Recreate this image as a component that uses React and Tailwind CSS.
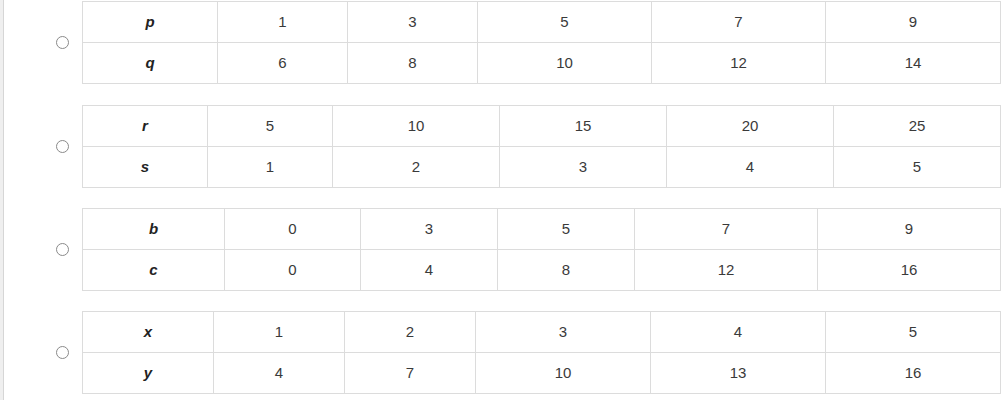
import React from "react";

const tables = [
  {
    vars: ["p", "q"],
    widths: ["w-[135px]", "w-[130px]", "w-[130px]", "w-[174px]", "w-[174px]", "w-[175px]"],
    rows: [
      [1, 3, 5, 7, 9],
      [6, 8, 10, 12, 14],
    ],
    gap: "mt-px",
  },
  {
    vars: ["r", "s"],
    widths: ["w-[125px]", "w-[125px]", "w-[167px]", "w-[167px]", "w-[167px]", "w-[167px]"],
    rows: [
      [5, 10, 15, 20, 25],
      [1, 2, 3, 4, 5],
    ],
    gap: "mt-[21px]",
  },
  {
    vars: ["b", "c"],
    widths: ["w-[142px]", "w-[136px]", "w-[137px]", "w-[137px]", "w-[183px]", "w-[183px]"],
    rows: [
      [0, 3, 5, 7, 9],
      [0, 4, 8, 12, 16],
    ],
    gap: "mt-[20px]",
  },
  {
    vars: ["x", "y"],
    widths: ["w-[131px]", "w-[131px]", "w-[131px]", "w-[175px]", "w-[175px]", "w-[175px]"],
    rows: [
      [1, 2, 3, 4, 5],
      [4, 7, 10, 13, 16],
    ],
    gap: "mt-[20px]",
  },
];

function ValueTable({ vars, widths, rows }) {
  return (
    <div className="border-l border-t border-[#dcdcdc]">
      {rows.map((row, i) => (
        <div key={i} className="flex">
          <div
            className={`${widths[0]} h-[41px] flex items-center justify-center border-r border-b border-[#dcdcdc] font-bold italic text-[#222]`}
          >
            {vars[i]}
          </div>
          {row.map((v, j) => (
            <div
              key={j}
              className={`${widths[j + 1]} h-[41px] flex items-center justify-center border-r border-b border-[#dcdcdc] text-[#3a3a3a]`}
            >
              {v}
            </div>
          ))}
        </div>
      ))}
    </div>
  );
}

export default function App() {
  return (
    <div
      className="flex w-[1005px] h-[400px] bg-white text-[15px] overflow-hidden"
      style={{ fontFamily: '"Liberation Sans", Arial, sans-serif' }}
    >
      <div className="w-[4px] shrink-0 bg-[#efefef] border-r border-[#d6d6d6]" />
      <div className="flex flex-col pl-[52px]">
        {tables.map((t, i) => (
          <div key={i} className={`flex items-center ${t.gap}`}>
            <span className="w-[13px] h-[13px] rounded-full border border-[#8a8a8a] bg-white shrink-0" />
            <div className="ml-[13px]">
              <ValueTable {...t} />
            </div>
          </div>
        ))}
      </div>
    </div>
  );
}
